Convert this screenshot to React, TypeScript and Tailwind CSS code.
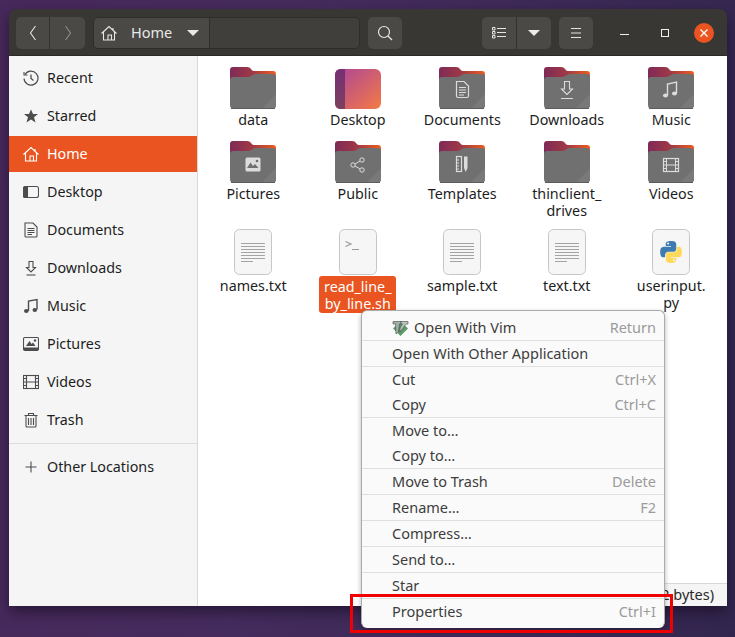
import React from "react";

const font = { fontFamily: '"Noto Sans", sans-serif' };

function Folder({ children, id }: { children?: React.ReactNode; id: string }) {
  return (
    <svg width="46" height="42" viewBox="0 0 46 42" className="mt-[3px]">
      <defs>
        <linearGradient id={id} x1="0" x2="1" y1="0" y2="0">
          <stop offset="0" stopColor="#7f2a57" />
          <stop offset="0.5" stopColor="#a03a45" />
          <stop offset="1" stopColor="#ee5c1e" />
        </linearGradient>
      </defs>
      <path d="M3 0H17Q20 0 21 2T24 4H43Q46 4 46 7V30H0V3Q0 0 3 0Z" fill={`url(#${id})`} />
      <path d="M0 13Q0 10 3 10H17Q20 10 22 8.500T25 7H43Q46 7 46 10V38Q46 42 42 42H4Q0 42 0 38Z" fill="#707070" />
      <path d="M46 27V38Q46 41.500 42 41.500H32Z" fill="#797979" />
      <path d="M1 41.500H45" stroke="#5c5c5c" strokeWidth="1" />
      {children}
    </svg>
  );
}

function FileIcon({ children }: { children?: React.ReactNode }) {
  return (
    <svg width="38" height="46" viewBox="0 0 38 46">
      <rect x="0.500" y="0.500" width="37" height="45" rx="5" fill="#f6f6f6" stroke="#c6c6c6" />
      {children}
    </svg>
  );
}

const TextLines = () => (
  <g stroke="#a3a3a3" strokeWidth="1">
    <path d="M7 14.500H31M7 17.500H31M7 20.500H31M7 23.500H31M7 26.500H31M7 29.500H31M7 32.500H19" />
  </g>
);

const glyph = { fill: "none", stroke: "#dcdcdc", strokeWidth: 1 };

const items: { label: React.ReactNode; icon: React.ReactNode; selected?: boolean }[] = [
  { label: "data", icon: <Folder id="f1" /> },
  {
    label: "Desktop",
    icon: (
      <svg width="46" height="40" viewBox="0 0 46 40" className="mt-[5px]">
        <defs>
          <linearGradient id="dg" x1="0" y1="0" x2="1" y2="1">
            <stop offset="0" stopColor="#ac4599" />
            <stop offset="1" stopColor="#f47a45" />
          </linearGradient>
          <linearGradient id="ds" x1="0" y1="0" x2="0" y2="1">
            <stop offset="0" stopColor="#772f75" />
            <stop offset="1" stopColor="#7c405e" />
          </linearGradient>
        </defs>
        <rect width="46" height="40" rx="6" fill="url(#dg)" />
        <path d="M6 0H10V40H6Q0 40 0 34V6Q0 0 6 0Z" fill="url(#ds)" />
      </svg>
    ),
  },
  {
    label: "Documents",
    icon: (
      <Folder id="f2">
        <path d="M17.500 14.500H25L29.500 19V29Q29.500 30.500 28 30.500H19Q17.500 30.500 17.500 29Z" {...glyph} strokeWidth={1.2} />
        <path d="M20 20.500H27M20 23H27M20 25.500H27M20 28H25" {...glyph} />
      </Folder>
    ),
  },
  {
    label: "Downloads",
    icon: (
      <Folder id="f3">
        <path d="M20.500 14.500H25.500V22H28.500L23 27.500L17.500 22H20.500Z" {...glyph} strokeWidth={1.1} />
        <path d="M17 31.500H29" {...glyph} />
      </Folder>
    ),
  },
  {
    label: "Music",
    icon: (
      <Folder id="f4">
        <path d="M19.500 28V17L28.500 15V26" {...glyph} strokeWidth={1.4} />
        <ellipse cx="17.500" cy="28.500" rx="2.500" ry="2" fill="#dcdcdc" />
        <ellipse cx="26.500" cy="26.500" rx="2.500" ry="2" fill="#dcdcdc" />
      </Folder>
    ),
  },
  {
    label: "Pictures",
    icon: (
      <Folder id="f5">
        <rect x="15.500" y="16.500" width="15" height="14" rx="1.500" fill="#dcdcdc" />
        <path d="M17 27L20.500 21.500L23 25L25 23L28.500 27Z" fill="#707070" />
        <circle cx="27" cy="20" r="1.300" fill="#707070" />
      </Folder>
    ),
  },
  {
    label: "Public",
    icon: (
      <Folder id="f6">
        <circle cx="18" cy="24" r="2.200" {...glyph} />
        <circle cx="27" cy="19" r="2.200" {...glyph} />
        <circle cx="27" cy="29" r="2.200" {...glyph} />
        <path d="M20 23L25 20M20 25L25 28" {...glyph} />
      </Folder>
    ),
  },
  {
    label: "Templates",
    icon: (
      <Folder id="f7">
        <rect x="17.500" y="15.500" width="5" height="15" {...glyph} strokeWidth={1.2} />
        <path d="M18 19H20M18 22H20M18 25H20M18 28H20" {...glyph} />
        <path d="M25 15.500H28.500V27L26.750 31L25 27Z" fill="#dcdcdc" />
      </Folder>
    ),
  },
  {
    label: (
      <>
        thinclient_
        <br />
        drives
      </>
    ),
    icon: <Folder id="f8" />,
  },
  {
    label: "Videos",
    icon: (
      <Folder id="f9">
        <rect x="15.500" y="17.500" width="15" height="13" {...glyph} strokeWidth={1.2} />
        <path d="M18.500 17.500V30.500M27.500 17.500V30.500M18.500 24H27.500M15.500 20.500H18.500M15.500 24H18.500M15.500 27.500H18.500M27.500 20.500H30.500M27.500 24H30.500M27.500 27.500H30.500" {...glyph} />
      </Folder>
    ),
  },
  {
    label: "names.txt",
    icon: (
      <FileIcon>
        <TextLines />
      </FileIcon>
    ),
  },
  {
    label: (
      <>
        read_line_
        <br />
        by_line.sh
      </>
    ),
    selected: true,
    icon: (
      <FileIcon>
        <path d="M6.500 12.500L12 15L6.500 17.500" fill="none" stroke="#9a9a9a" strokeWidth="1.200" />
        <path d="M13 20.500H20" stroke="#9a9a9a" strokeWidth="1.200" />
      </FileIcon>
    ),
  },
  {
    label: "sample.txt",
    icon: (
      <FileIcon>
        <TextLines />
      </FileIcon>
    ),
  },
  {
    label: "text.txt",
    icon: (
      <FileIcon>
        <TextLines />
      </FileIcon>
    ),
  },
  {
    label: (
      <>
        userinput.
        <br />
        py
      </>
    ),
    icon: (
      <FileIcon>
        <svg x="8" y="12" width="22" height="22" viewBox="0 0 110 110">
          <path
            fill="#3f7bb0"
            fillRule="evenodd"
            d="M54.900 0c-4.600 0-9 .4-12.800 1.100C30.800 3.100 28.700 7.200 28.700 14.900V25h26.200v3.400H28.700h-9.800c-7.600 0-14.300 4.600-16.400 13.300-2.400 10-2.500 16.200 0 26.600 1.900 7.800 6.300 13.300 13.900 13.300h9V69.700c0-8.700 7.500-16.300 16.400-16.300h26.200c7.300 0 13.100-6 13.100-13.300V14.900c0-7.100-6-12.400-13.100-13.600C63.400.4 59.500 0 54.900 0zM40.800 8c2.700 0 4.900 2.200 4.900 5 0 2.700-2.200 4.900-4.900 4.900-2.700 0-4.900-2.200-4.900-4.900 0-2.800 2.200-5 4.900-5z"
          />
          <path
            fill="#ffd95c"
            fillRule="evenodd"
            d="M84.900 28.400v11.700c0 9.100-7.700 16.700-16.400 16.700H42.300c-7.200 0-13.100 6.100-13.100 13.300v25c0 7.100 6.200 11.300 13.100 13.300 8.300 2.400 16.300 2.900 26.200 0 6.600-1.900 13.100-5.800 13.100-13.300V84.900H55.400v-3.300h39.300c7.600 0 10.500-5.300 13.100-13.300 2.700-8.200 2.600-16.100 0-26.600-1.900-7.600-5.500-13.300-13.100-13.300H84.900zM70.100 91.600c2.700 0 4.900 2.200 4.900 4.900 0 2.800-2.200 5-4.900 5-2.700 0-4.900-2.200-4.900-5 0-2.700 2.200-4.900 4.900-4.900z"
          />
        </svg>
      </FileIcon>
    ),
  },
];

function Ic({ children, color = "#4d4d4d" }: { children: React.ReactNode; color?: string }) {
  return (
    <svg width="16" height="16" viewBox="0 0 16 16" fill="none" stroke={color} strokeWidth="1.100" className="shrink-0">
      {children}
    </svg>
  );
}

const HomeGlyph = ({ color }: { color: string }) => (
  <Ic color={color}>
    <path d="M0.500 8.500L8 1.500L15.500 8.500M2.500 7V15H13.500V7M7 15V10H10.500V15M12 3V5.500" />
  </Ic>
);

const side: { label: string; icon: React.ReactNode; active?: boolean }[] = [
  {
    label: "Recent",
    icon: (
      <Ic>
        <path d="M2 4.500A7 7 0 1 1 1 8.500" strokeWidth="1.200" />
        <path d="M1 2V5H4.500" />
        <path d="M8 4.500V8.500L10.500 10.500" strokeWidth="1.300" />
      </Ic>
    ),
  },
  {
    label: "Starred",
    icon: (
      <Ic>
        <path d="M8 1.500L10 6H15L11 9.300L12.500 14.500L8 11.500L3.500 14.500L5 9.300L1 6H6Z" fill="#4d4d4d" stroke="none" />
      </Ic>
    ),
  },
  { label: "Home", active: true, icon: <HomeGlyph color="#ffffff" /> },
  {
    label: "Desktop",
    icon: (
      <Ic>
        <rect x="0.500" y="2.500" width="15" height="11" rx="2" />
        <path d="M2.500 2.500H4.500V13.500H2.500Q0.500 13.500 0.500 11.500V4.500Q0.500 2.500 2.500 2.500Z" fill="#4d4d4d" />
      </Ic>
    ),
  },
  {
    label: "Documents",
    icon: (
      <Ic>
        <path d="M2 1H10L14 5V14Q14 15 13 15H3Q2 15 2 14Z" />
        <path d="M4.500 6.500H11.500M4.500 8.500H11.500M4.500 10.500H11.500M4.500 12.500H9" />
      </Ic>
    ),
  },
  {
    label: "Downloads",
    icon: (
      <Ic>
        <path d="M6 1.500H10V7.500H12.500L8 12L3.500 7.500H6Z" />
        <path d="M3.500 15H12.500" />
      </Ic>
    ),
  },
  {
    label: "Music",
    icon: (
      <Ic>
        <path d="M5.500 13V3L14 1.500V11.500" strokeWidth="1.400" />
        <ellipse cx="3.300" cy="13" rx="2.300" ry="1.900" fill="#4d4d4d" stroke="none" />
        <ellipse cx="11.800" cy="12" rx="2.300" ry="1.900" fill="#4d4d4d" stroke="none" />
      </Ic>
    ),
  },
  {
    label: "Pictures",
    icon: (
      <Ic>
        <rect x="0.500" y="1.500" width="15" height="13" rx="1.500" />
        <path d="M0.500 11.500H15.500V13Q15.500 14.500 14 14.500H2Q0.500 14.500 0.500 13Z" fill="#4d4d4d" stroke="none" />
        <path d="M3 10L6.500 5L8.500 8L10 6.500L12.500 10Z" fill="#4d4d4d" stroke="none" />
        <circle cx="12" cy="4.500" r="1.200" fill="#4d4d4d" stroke="none" />
      </Ic>
    ),
  },
  {
    label: "Videos",
    icon: (
      <Ic>
        <rect x="0.500" y="1.500" width="15" height="13" />
        <path d="M3.500 1.500V14.500M12.500 1.500V14.500M3.500 8H12.500M0.500 4.500H3.500M0.500 8H3.500M0.500 11.500H3.500M12.500 4.500H15.500M12.500 8H15.500M12.500 11.500H15.500" />
      </Ic>
    ),
  },
  {
    label: "Trash",
    icon: (
      <Ic>
        <path d="M1.500 3.500H14.500M5.500 3V1.500H10.500V3M3 3.500V14Q3 15 4 15H12Q13 15 13 14V3.500M5.500 6V13M8 6V13M10.500 6V13" />
      </Ic>
    ),
  },
];

function MenuRow({ children, accel, icon }: { children: React.ReactNode; accel?: string; icon?: React.ReactNode }) {
  return (
    <div className="h-[25px] flex items-center pl-[30px] pr-[8px] text-[14.500px] text-[#3d3d3d]">
      {icon}
      <span>{children}</span>
      {accel && <span className="ml-auto text-[#9b9b9b]">{accel}</span>}
    </div>
  );
}

const Sep = () => <div className="h-px bg-[#dfdfdf]" />;

const btn = "h-[32px] flex items-center justify-center bg-[#4a4945]";

export default function App() {
  return (
    <div
      style={font}
      className="relative w-[735px] h-[637px] overflow-hidden pl-[9px] pt-[9px] bg-[linear-gradient(100deg,#48295c_0%,#452c5e_40%,#32264e_100%)]"
    >
      <div className="w-[718px] h-[597px] flex flex-col rounded-t-[8px] overflow-hidden shadow-[0_6px_14px_rgba(20,10,30,0.6)]">
        <header className="h-[47px] shrink-0 bg-[#383734] border-b border-[#2b2a28] flex items-center pl-[7px] pt-px">
          <div className="flex w-[69px] rounded-[5px] overflow-hidden">
            <div className={`${btn} w-[34px] border-r border-[#33322f]`}>
              <svg width="10" height="16" viewBox="0 0 10 16" fill="none" stroke="#e6e6e6" strokeWidth="1.100">
                <path d="M7.500 1L2.500 8L7.500 15" />
              </svg>
            </div>
            <div className={`${btn} flex-1`}>
              <svg width="10" height="16" viewBox="0 0 10 16" fill="none" stroke="#8f8f8c" strokeWidth="1.100">
                <path d="M2.500 1L7.500 8L2.500 15" />
              </svg>
            </div>
          </div>
          <div className="ml-[8px] w-[267px] h-[32px] flex rounded-[5px] border border-[#2e2d2b] overflow-hidden">
            <div className="w-[116px] bg-[#4a4945] border-r border-[#2e2d2b] flex items-center text-[14.500px] text-[#e8e8e8] pl-[7px]">
              <HomeGlyph color="#e8e8e8" />
              <span className="ml-[14px]">Home</span>
              <svg width="12" height="6" viewBox="0 0 12 6" className="ml-[15px]">
                <path d="M0 0H12L6 6Z" fill="#e8e8e8" />
              </svg>
            </div>
            <div className="flex-1 bg-[#403f3b]" />
          </div>
          <div className={`${btn} ml-[8px] w-[34px] rounded-[5px]`}>
            <svg width="16" height="16" viewBox="0 0 16 16" fill="none" stroke="#e6e6e6" strokeWidth="1.200">
              <circle cx="7" cy="7" r="5.500" />
              <path d="M11 11L15 15" />
            </svg>
          </div>
          <div className="ml-[80px] flex w-[69px] rounded-[5px] overflow-hidden">
            <div className={`${btn} w-[35px] border-r border-[#33322f]`}>
              <svg width="14" height="12" viewBox="0 0 14 12" fill="none" stroke="#e6e6e6">
                <path d="M0.500 0.500H3V3H0.500ZM0.500 4.500H3V7H0.500ZM0.500 8.500H3V11H0.500ZM5 1.500H14M5 5.500H14M5 9.500H14" />
              </svg>
            </div>
            <div className={`${btn} flex-1`}>
              <svg width="12" height="6" viewBox="0 0 12 6">
                <path d="M0 0H12L6 6Z" fill="#ececec" />
              </svg>
            </div>
          </div>
          <div className={`${btn} ml-[8px] w-[34px] rounded-[5px]`}>
            <svg width="12" height="10" viewBox="0 0 12 10" stroke="#e6e6e6">
              <path d="M1 0.500H11M1 5H11M1 9.500H11" />
            </svg>
          </div>
          <div className="ml-[23px] w-[16px] h-[16px] flex items-center justify-center">
            <div className="w-[9px] h-px mt-[4px] bg-[#f0f0f0]" />
          </div>
          <div className="ml-[29px] w-[6px] h-[6px] border border-[#f0f0f0] box-content" />
          <div className="ml-[25px] w-[20px] h-[20px] rounded-full bg-[#e95420] flex items-center justify-center">
            <svg width="10" height="10" viewBox="0 0 10 10" stroke="#ffffff" strokeWidth="1.300">
              <path d="M1.500 1.500L8.500 8.500M8.500 1.500L1.500 8.500" />
            </svg>
          </div>
        </header>

        <div className="relative flex-1 flex min-h-0">
          <aside className="w-[189px] shrink-0 bg-[#f5f5f5] border-r border-[#d8d8d8] pt-[4px] flex flex-col text-[14.300px] text-[#1d1d1d]">
            {side.map((s) => (
              <div
                key={s.label}
                className={`h-[36px] mb-[2px] shrink-0 flex items-center pl-[14px] gap-[8px] ${s.active ? "bg-[#e95420] text-white" : ""}`}
              >
                {s.icon}
                <span>{s.label}</span>
              </div>
            ))}
            <div className="h-px bg-[#dcdcdc] mt-[3px]" />
            <div className="h-[36px] mt-[5px] flex items-center pl-[14px] gap-[8px]">
              <Ic>
                <path d="M8 2.500V13.500M2.500 8H13.500" />
              </Ic>
              <span>Other Locations</span>
            </div>
          </aside>
          <main className="flex-1 bg-white pl-[3px] pt-[6px] grid grid-cols-[repeat(5,104.500px)] grid-rows-[74px_92px_auto] justify-start content-start text-[14.300px] text-[#1d1d1d]">
            {items.map((it, i) => (
              <div key={i} className="flex flex-col items-center">
                <div className="w-[48px] h-[48px] flex items-center justify-center shrink-0">{it.icon}</div>
                <div
                  className={`text-center leading-[17px] rounded-[3px] ${it.selected ? "w-[77px] bg-[#e95420] text-white py-[1.500px]" : "mt-px px-[3px]"}`}
                >
                  {it.label}
                </div>
              </div>
            ))}
          </main>
          <div className="absolute right-0 bottom-0 h-[23px] pl-[8px] pr-[13px] flex items-center bg-[#f5f5f5] border-t border-l border-[#d8d8d8] text-[14.500px] text-[#2a2a2a]">
            “read_line_by_line.sh” selected (212 bytes)
          </div>
        </div>
      </div>

      <div className="absolute left-[361px] top-[310px] w-[304px] h-[318px] py-[4px] bg-[#fafafa] border border-[#ababab] border-b-0 rounded-[6px] shadow-[0_2px_5px_rgba(0,0,0,0.3)]">
        <MenuRow
          accel="Return"
          icon={
            <svg width="17" height="17" viewBox="0 0 17 17" className="mr-[5px] -mb-px">
              <path d="M8.500 1L16 8.500L8.500 16L1 8.500Z" fill="#5c9a6b" />
              <path d="M1 1.500H9V4H7.500L6.500 12L4 14L3.500 4H1Z" fill="#9fb3a5" stroke="#4a4a4a" strokeWidth="0.600" />
              <path d="M9 1.500H16V4H14L8 12V8L10.500 4H9Z" fill="#b6c6ba" stroke="#4a4a4a" strokeWidth="0.600" />
            </svg>
          }
        >
          Open With Vim
        </MenuRow>
        <Sep />
        <MenuRow>Open With Other Application</MenuRow>
        <Sep />
        <MenuRow accel="Ctrl+X">Cut</MenuRow>
        <MenuRow accel="Ctrl+C">Copy</MenuRow>
        <Sep />
        <MenuRow>Move to…</MenuRow>
        <MenuRow>Copy to…</MenuRow>
        <Sep />
        <MenuRow accel="Delete">Move to Trash</MenuRow>
        <Sep />
        <MenuRow accel="F2">Rename…</MenuRow>
        <Sep />
        <MenuRow>Compress…</MenuRow>
        <Sep />
        <MenuRow>Send to…</MenuRow>
        <Sep />
        <MenuRow>Star</MenuRow>
        <Sep />
        <MenuRow accel="Ctrl+I">Properties</MenuRow>
      </div>

      <div className="absolute left-[350px] top-[594px] w-[323px] h-[39px] border-[3px] border-[#f00000]" />
    </div>
  );
}
